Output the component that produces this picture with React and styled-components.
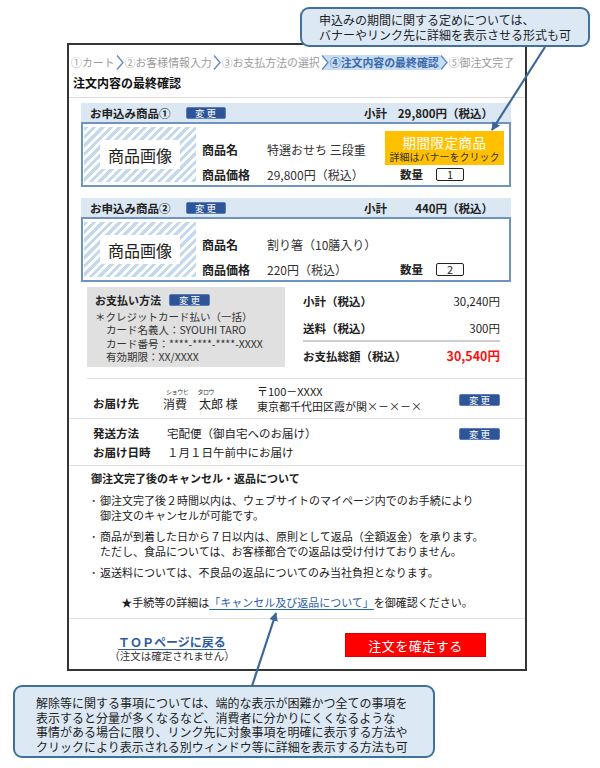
import React from 'react'
import styled, { createGlobalStyle, css } from 'styled-components'

const GlobalStyle = createGlobalStyle`
  body {
    margin: 0;
    background: #fff;
    font-family: "Noto Sans CJK JP", "Noto Sans", sans-serif;
    color: #222;
  }
`

const Canvas = styled.div`
  position: relative;
  width: 600px;
  height: 768px;
  overflow: hidden;
  padding-top: 43px;
  box-sizing: border-box;
`

const Frame = styled.div`
  margin-left: 67px;
  width: 460px;
  height: 628px;
  box-sizing: border-box;
  border: 2px solid #353535;
  background: #fff;
  display: flex;
  flex-direction: column;
  overflow: hidden;
`

/* breadcrumb */
const Steps = styled.div`
  display: flex;
  align-items: center;
  height: 15px;
  margin: 10px 0 0 1px;
  font-size: 10.9px;
  line-height: 15px;
  color: #9b9b9b;
  white-space: nowrap;
`

const Step = styled.span`
  padding: 0 1px;
  ${p => p.$active && css`
    color: #3a69ab;
    font-weight: 700;
    background: #c8dcf2;
    margin: 0 -7px;
    padding: 0 8px 0 8px;
    clip-path: polygon(0 0, calc(100% - 7px) 0, 100% 50%, calc(100% - 7px) 100%, 0 100%, 7px 50%);
  `}
`

const ChevSvg = styled.svg`
  flex: none;
  position: relative;
  z-index: 1;
`

const Chevron = () => (
  <ChevSvg width="8" height="15" viewBox="0 0 8 15">
    <path d="M1 0.5 L7 7.5 L1 14.5" fill="none" stroke="#5a87c2" strokeWidth="1.3" />
  </ChevSvg>
)

const PageTitle = styled.h1`
  margin: 0;
  font-size: 12px;
  line-height: 16px;
  font-weight: 700;
  padding: 5px 0 6px 4px;
  border-bottom: 1px solid #dcdcdc;
  color: #111;
`

/* products */
const Product = styled.section`
  margin: ${p => p.$top}px 14px 0 12px;
`

const ProductHead = styled.div`
  display: flex;
  align-items: center;
  height: 19px;
  padding: 0 18px 0 9px;
  background: #dbe8f4;
  font-size: 11.5px;
  font-weight: 700;
  color: #222;
`

const HeadTitle = styled.span`
  margin-right: 15px;
`

const ChangeButton = styled.span`
  display: inline-flex;
  align-items: center;
  justify-content: center;
  width: ${p => p.$w || 40}px;
  height: 12px;
  box-sizing: border-box;
  border: 1px solid #5b7cb5;
  border-radius: 2px;
  background: #2d5597;
  color: #fff;
  font-size: 9.5px;
  font-weight: 400;
  letter-spacing: 2px;
  padding-left: 2px;
  flex: none;
`

const SubLabel = styled.span`
  margin-left: auto;
`

const SubValue = styled.span`
  width: 106px;
  text-align: right;
  white-space: nowrap;
`

const ProductBox = styled.div`
  display: flex;
  align-items: stretch;
  height: 65px;
  box-sizing: border-box;
  border: 2px solid #6f94c2;
  padding-left: 1px;
`

const Thumb = styled.div`
  align-self: center;
  width: 112px;
  height: 55px;
  display: flex;
  align-items: center;
  justify-content: center;
  background: repeating-linear-gradient(135deg, #c4d9ee 0 3px, #fff 3px 6px);
  flex: none;
`

const ThumbLabel = styled.span`
  width: 80px;
  height: 29px;
  background: #fff;
  display: flex;
  align-items: center;
  justify-content: center;
  font-size: 16px;
  color: #222;
`

const Info = styled.div`
  flex: 1;
  display: flex;
  flex-direction: column;
  justify-content: space-between;
  padding: 16px 0 2px 6px;
`

const InfoRow = styled.div`
  display: flex;
  align-items: center;
  height: 18px;
  font-size: 12px;
`

const InfoLabel = styled.span`
  width: 65px;
  font-weight: 700;
  color: #222;
`

const InfoValue = styled.span`
  color: #333;
`

const Promo = styled.div`
  margin: -9px 5px -7px auto;
  width: 119px;
  height: 34px;
  background: #ffc000;
  display: flex;
  flex-direction: column;
  align-items: center;
  justify-content: center;
`

const PromoTitle = styled.span`
  color: #fff;
  font-size: 13.5px;
  line-height: 16px;
  letter-spacing: 0.5px;
`

const PromoSub = styled.span`
  color: #333;
  font-size: 10px;
  line-height: 13px;
`

const Qty = styled.div`
  margin: 0 45px 0 auto;
  display: flex;
  align-items: center;
  font-weight: 700;
  font-size: 11.5px;
`

const QtyBox = styled.span`
  margin-left: 13px;
  width: 28px;
  height: 13px;
  box-sizing: border-box;
  border: 1.5px solid #222;
  border-radius: 2px;
  display: flex;
  align-items: center;
  justify-content: center;
  font-size: 11px;
  font-weight: 400;
`

/* payment */
const Payment = styled.section`
  display: flex;
  margin: 5px 0 0 18px;
  padding-bottom: 11px;
  border-bottom: 1px solid #e2e2e2;
`

const PayBox = styled.div`
  width: 198px;
  height: 80px;
  box-sizing: border-box;
  padding: 6px 8px 0;
  background: #e0e0e0;
  font-size: 10.5px;
  color: #333;
`

const PayTitle = styled.div`
  display: flex;
  align-items: center;
  gap: 8px;
  height: 14px;
  font-size: 11px;
  font-weight: 700;
  color: #222;
  margin-bottom: 3px;
`

const PayLine = styled.div`
  line-height: 13.3px;
  padding-left: ${p => p.$indent || 0}px;
  white-space: nowrap;
`

const Summary = styled.div`
  margin-left: 18px;
  width: 197px;
  padding-top: 6px;
`

const SumRow = styled.div`
  display: flex;
  justify-content: space-between;
  align-items: center;
  height: 16px;
  font-size: 11.5px;
  margin-bottom: ${p => p.$mb || 0}px;
`

const SumLabel = styled.span`
  font-weight: 700;
`

const SumValue = styled.span`
  ${p => p.$total && css`
    color: #ff1010;
    font-weight: 700;
    font-size: 12.5px;
  `}
`

const SumDivider = styled.div`
  height: 1.5px;
  background: #cfcfcf;
  margin: 4px 0 6px;
`

/* delivery */
const Block = styled.section`
  display: flex;
  flex-direction: column;
  justify-content: center;
  height: ${p => p.$h}px;
  padding: 0 25px 0 24px;
  border-bottom: 1px solid #e2e2e2;
  font-size: 11.5px;
`

const Line = styled.div`
  display: flex;
  align-items: center;
  min-height: 16px;
  margin-top: ${p => p.$mt || 0}px;
`

const CellLabel = styled.span`
  width: ${p => p.$w}px;
  font-weight: 700;
  color: #222;
  flex: none;
  padding-top: ${p => p.$pt || 0}px;
`

const NameBlock = styled.span`
  width: 94px;
  flex: none;
  display: flex;
  flex-direction: column;
`

const Kana = styled.span`
  display: flex;
  gap: 9px;
  padding-left: 3px;
  font-size: 6px;
  line-height: 9px;
  letter-spacing: -0.4px;
  color: #333;
`

const Name = styled.span`
  font-size: 12px;
  line-height: 15px;
  white-space: pre;
`

const Address = styled.span`
  display: flex;
  flex-direction: column;
  font-size: 11px;
  line-height: 15px;
`

const Push = styled.span`
  margin-left: auto;
`

/* cancel */
const Cancel = styled.section`
  padding: 4px 0 8px 22px;
  border-bottom: 1px solid #e2e2e2;
  font-size: 11px;
  color: #222;
`

const CancelTitle = styled.h2`
  margin: 0;
  font-size: 11px;
  line-height: 16px;
  font-weight: 700;
`

const Bullets = styled.ul`
  list-style: none;
  margin: 7px 0 0;
  padding: 0;
  display: flex;
  flex-direction: column;
  gap: 6px;
`

const BulletItem = styled.li`
  display: flex;
  line-height: 15px;
`

const Dot = styled.span`
  width: 9px;
  flex: none;
`

const Notice = styled.p`
  margin: 15px 22px 0 0;
  text-align: center;
  line-height: 15px;
`

const TextLink = styled.a`
  color: #2e62a8;
  text-decoration: underline;
  text-underline-offset: 2px;
`

/* footer */
const Footer = styled.div`
  flex: 1;
  display: flex;
  align-items: flex-start;
  padding-top: 15px;
`

const BackCol = styled.div`
  width: 206px;
  display: flex;
  flex-direction: column;
  align-items: center;
`

const BackLink = styled.a`
  font-size: 12px;
  line-height: 15px;
  font-weight: 700;
  color: #2f5d9c;
  text-decoration: underline;
  text-underline-offset: 2px;
`

const BackNote = styled.span`
  font-size: 10.5px;
  line-height: 13px;
  color: #333;
`

const ConfirmButton = styled.button`
  margin: -1px 0 0 70px;
  width: 141px;
  height: 24px;
  border: 1px solid #e00000;
  background: #ff0000;
  color: #fff;
  font-family: inherit;
  font-size: 13px;
  letter-spacing: 0.5px;
  padding: 0;
`

/* annotations over the mockup */
const Callout = styled.div`
  position: absolute;
  left: ${p => p.$x}px;
  top: ${p => p.$y}px;
  width: ${p => p.$w}px;
  height: ${p => p.$h}px;
  box-sizing: border-box;
  padding: ${p => p.$pad};
  background: #dce9f5;
  border: 2px solid #41709c;
  border-radius: 9px;
  font-size: 12px;
  line-height: ${p => p.$lh}px;
  color: #222;
  white-space: nowrap;
`

const Arrows = styled.svg`
  position: absolute;
  left: 0;
  top: 0;
  pointer-events: none;
`

export default function App() {
  return (
    <Canvas>
      <GlobalStyle />
      <Frame>
        <Steps>
          <Step>①カート</Step>
          <Chevron />
          <Step>②お客様情報入力</Step>
          <Chevron />
          <Step>③お支払方法の選択</Step>
          <Chevron />
          <Step $active>④注文内容の最終確認</Step>
          <Chevron />
          <Step>⑤御注文完了</Step>
        </Steps>
        <PageTitle>注文内容の最終確認</PageTitle>

        <Product $top={5}>
          <ProductHead>
            <HeadTitle>お申込み商品①</HeadTitle>
            <ChangeButton>変更</ChangeButton>
            <SubLabel>小計</SubLabel>
            <SubValue>29,800円（税込）</SubValue>
          </ProductHead>
          <ProductBox>
            <Thumb><ThumbLabel>商品画像</ThumbLabel></Thumb>
            <Info>
              <InfoRow>
                <InfoLabel>商品名</InfoLabel>
                <InfoValue>特選おせち 三段重</InfoValue>
                <Promo>
                  <PromoTitle>期間限定商品</PromoTitle>
                  <PromoSub>詳細はバナーをクリック</PromoSub>
                </Promo>
              </InfoRow>
              <InfoRow>
                <InfoLabel>商品価格</InfoLabel>
                <InfoValue>29,800円（税込）</InfoValue>
                <Qty>数量<QtyBox>1</QtyBox></Qty>
              </InfoRow>
            </Info>
          </ProductBox>
        </Product>

        <Product $top={11}>
          <ProductHead>
            <HeadTitle>お申込み商品②</HeadTitle>
            <ChangeButton>変更</ChangeButton>
            <SubLabel>小計</SubLabel>
            <SubValue>440円（税込）</SubValue>
          </ProductHead>
          <ProductBox>
            <Thumb><ThumbLabel>商品画像</ThumbLabel></Thumb>
            <Info>
              <InfoRow>
                <InfoLabel>商品名</InfoLabel>
                <InfoValue>割り箸（10膳入り）</InfoValue>
              </InfoRow>
              <InfoRow>
                <InfoLabel>商品価格</InfoLabel>
                <InfoValue>220円（税込）</InfoValue>
                <Qty>数量<QtyBox>2</QtyBox></Qty>
              </InfoRow>
            </Info>
          </ProductBox>
        </Product>

        <Payment>
          <PayBox>
            <PayTitle>お支払い方法<ChangeButton $w={41}>変更</ChangeButton></PayTitle>
            <PayLine>＊クレジットカード払い（一括）</PayLine>
            <PayLine $indent={11}>カード名義人：SYOUHI TARO</PayLine>
            <PayLine $indent={11}>カード番号：****-****-****-XXXX</PayLine>
            <PayLine $indent={11}>有効期限：XX/XXXX</PayLine>
          </PayBox>
          <Summary>
            <SumRow $mb={11}>
              <SumLabel>小計（税込）</SumLabel>
              <SumValue>30,240円</SumValue>
            </SumRow>
            <SumRow>
              <SumLabel>送料（税込）</SumLabel>
              <SumValue>300円</SumValue>
            </SumRow>
            <SumDivider />
            <SumRow>
              <SumLabel>お支払総額（税込）</SumLabel>
              <SumValue $total>30,540円</SumValue>
            </SumRow>
          </Summary>
        </Payment>

        <Block $h={39}>
          <Line>
            <CellLabel $w={70} $pt={9}>お届け先</CellLabel>
            <NameBlock>
              <Kana><span>ショウヒ</span><span>タロウ</span></Kana>
              <Name>{'消費　太郎 様'}</Name>
            </NameBlock>
            <Address>
              <span>〒100－XXXX</span>
              <span>東京都千代田区霞が関×－×－×</span>
            </Address>
            <Push><ChangeButton $w={41}>変更</ChangeButton></Push>
          </Line>
        </Block>

        <Block $h={46}>
          <Line>
            <CellLabel $w={74}>発送方法</CellLabel>
            <span>宅配便（御自宅へのお届け）</span>
            <Push><ChangeButton $w={41}>変更</ChangeButton></Push>
          </Line>
          <Line $mt={3}>
            <CellLabel $w={74}>お届け日時</CellLabel>
            <span>１月１日午前中にお届け</span>
          </Line>
        </Block>

        <Cancel>
          <CancelTitle>御注文完了後のキャンセル・返品について</CancelTitle>
          <Bullets>
            <BulletItem>
              <Dot>･</Dot>
              <span>御注文完了後２時間以内は、ウェブサイトのマイページ内でのお手続により<br />御注文のキャンセルが可能です。</span>
            </BulletItem>
            <BulletItem>
              <Dot>･</Dot>
              <span>商品が到着した日から７日以内は、原則として返品（全額返金）を承ります。<br />ただし、食品については、お客様都合での返品は受け付けておりません。</span>
            </BulletItem>
            <BulletItem>
              <Dot>･</Dot>
              <span>返送料については、不良品の返品についてのみ当社負担となります。</span>
            </BulletItem>
          </Bullets>
          <Notice>
            ★手続等の詳細は<TextLink href="#">「キャンセル及び返品について」</TextLink>を御確認ください。
          </Notice>
        </Cancel>

        <Footer>
          <BackCol>
            <BackLink href="#">ＴＯＰページに戻る</BackLink>
            <BackNote>（注文は確定されません）</BackNote>
          </BackCol>
          <ConfirmButton type="button">注文を確定する</ConfirmButton>
        </Footer>
      </Frame>

      <Callout $x={300} $y={7} $w={290} $h={40} $pad="3px 0 0 17px" $lh={15}>
        申込みの期間に関する定めについては、<br />
        バナーやリンク先に詳細を表示させる形式も可
      </Callout>

      <Callout $x={13} $y={685} $w={422} $h={73} $pad="9px 0 0 21px" $lh={14.5}>
        解除等に関する事項については、端的な表示が困難かつ全ての事項を<br />
        表示すると分量が多くなるなど、消費者に分かりにくくなるような<br />
        事情がある場合に限り、リンク先に対象事項を明確に表示する方法や<br />
        クリックにより表示される別ウィンドウ等に詳細を表示する方法も可
      </Callout>

      <Arrows width="600" height="768" viewBox="0 0 600 768">
        <defs>
          <marker id="head" viewBox="0 0 10 10" refX="9" refY="5" markerWidth="4" markerHeight="4" orient="auto">
            <path d="M0 0 L10 5 L0 10 Z" fill="#3d6699" />
          </marker>
        </defs>
        <line x1="545" y1="47" x2="492" y2="130" stroke="#3d6699" strokeWidth="2.2" markerEnd="url(#head)" />
        <line x1="252" y1="686" x2="276" y2="613" stroke="#3d6699" strokeWidth="2.2" markerEnd="url(#head)" />
      </Arrows>
    </Canvas>
  )
}
